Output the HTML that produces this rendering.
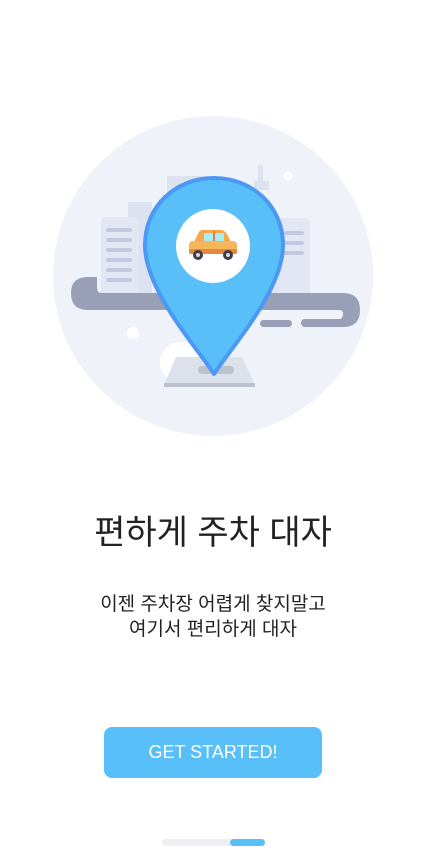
<!DOCTYPE html>
<html><head><meta charset="utf-8"><style>
html,body{margin:0;padding:0;background:#fff;}
body{width:426px;height:862px;position:relative;overflow:hidden;font-family:"Liberation Sans","Noto Sans CJK KR",sans-serif;}
.t{position:absolute;left:0;width:426px;text-align:center;color:#222;}
</style></head><body>
<svg width="426" height="862" style="position:absolute;left:0;top:0">
<circle cx="213" cy="276" r="160" fill="#eff2f9"/>
<rect x="167" y="176" width="40" height="120" fill="#dde2f0"/>
<rect x="128" y="202" width="24" height="95" fill="#dde2f0"/>
<rect x="101" y="217" width="38" height="80" rx="5" fill="#e3e7f3"/>
<g fill="#c3c8e1"><rect x="106" y="228" width="26" height="4" rx="2"/><rect x="106" y="238" width="26" height="4" rx="2"/><rect x="106" y="248" width="26" height="4" rx="2"/><rect x="106" y="258" width="26" height="4" rx="2"/><rect x="106" y="268" width="26" height="4" rx="2"/><rect x="106" y="278" width="26" height="4" rx="2"/></g>
<rect x="258" y="165" width="5" height="20" fill="#dde2f0"/>
<rect x="254" y="181" width="15" height="9" fill="#dde2f0"/>
<rect x="262" y="218" width="48" height="80" rx="5" fill="#e3e7f3"/>
<g fill="#c3c8e1"><rect x="284" y="231" width="20" height="4" rx="2"/><rect x="284" y="241" width="20" height="4" rx="2"/><rect x="284" y="251" width="20" height="4" rx="2"/></g>
<circle cx="288" cy="176" r="4" fill="#fff"/>
<circle cx="133" cy="333" r="6" fill="#fff"/>
<circle cx="180" cy="362" r="20" fill="#fff"/>
<path d="M92 277 H97 V288 Q97 293 102 293 H343 Q360 293 360 310 Q360 327 343 327 H305 A4 4 0 0 1 305 319 H339 Q343 319 343 314 Q343 310 339 310 H88 Q71 310 71 293 Q71 277 88 277 Z" fill="#989fb6"/>
<rect x="260" y="320" width="32" height="7" rx="3.5" fill="#989fb6"/>
<path d="M176 357 H242 L254 383 H165 Z" fill="#dce1ea"/>
<rect x="164" y="383" width="91" height="4" fill="#bcc2cd"/>
<rect x="198" y="366" width="36" height="8" rx="4" fill="#bcc3cc"/>
<path d="M214 374 C195 345 145 290 145 245 C145 206 176 178 214 178 C252 178 283 206 283 245 C283 290 233 345 214 374 Z" fill="#59bff9" stroke="#4b99f2" stroke-width="4" stroke-linejoin="round"/>
<circle cx="213" cy="246" r="37" fill="#fff"/>
<path d="M199 232 Q200 230 203 230 H221 Q225 230 228 236 L231 242 H194 Z" fill="#f4a84a"/>
<rect x="204" y="233" width="9" height="8" rx="1" fill="#a8ecf5"/>
<rect x="215" y="233" width="9" height="8" rx="1" fill="#a8ecf5"/>
<rect x="213" y="231" width="2" height="19" fill="#e77d3c"/>
<rect x="189" y="241" width="48" height="13" rx="4" fill="#f4b75c"/>
<rect x="189" y="249" width="48" height="5" rx="2" fill="#e8873e"/>
<circle cx="198" cy="255" r="5" fill="#3d3d4a"/><circle cx="198" cy="255" r="2" fill="#ddd"/>
<circle cx="228" cy="255" r="5" fill="#3d3d4a"/><circle cx="228" cy="255" r="2" fill="#ddd"/>
<rect x="162" y="839" width="103" height="7" rx="3.5" fill="#eeeff3"/>
<rect x="230" y="839" width="35" height="7" rx="3.5" fill="#59bff9"/>
</svg>
<div class="t" style="top:510px;font-size:34px;line-height:46px;">편하게 주차 대자</div>
<div class="t" style="top:592px;font-size:19px;line-height:25px;">이젠 주차장 어렵게 찾지말고<br>여기서 편리하게 대자</div>
<div style="position:absolute;left:104px;top:727px;width:218px;height:51px;border-radius:8px;background:#59bff9;color:#fff;font-size:18px;line-height:51px;text-align:center;">GET STARTED!</div>
</body></html>
